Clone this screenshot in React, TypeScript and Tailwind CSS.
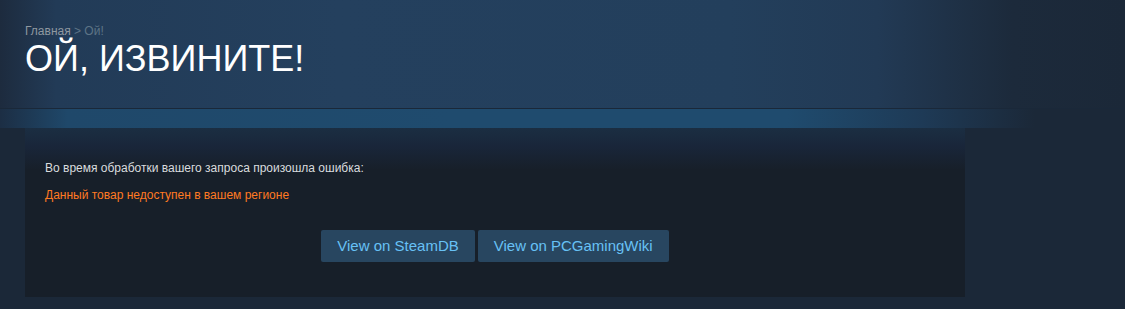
import React from "react";

export default function App() {
  return (
    <div className="w-[1125px] h-[309px] overflow-hidden bg-[#1b2838] font-['Liberation_Sans',Arial,sans-serif]">
      <div className="h-[108px] pl-[25px] pt-[23px] bg-[linear-gradient(90deg,#1d2b3e_0%,#223b57_5%,#24405e_30%,#233f5c_65%,#223a55_78%,#1c2a3b_90%,#1b2838_100%)]">
        <div className="text-[12px] leading-[16px] text-[#8f98a0]">
          Главная <span className="text-[#5d7486]">&gt; Ой!</span>
        </div>
        <h1 className="mt-0 text-[36px] leading-[40px] text-white font-normal uppercase tracking-[0px]">
          Ой, извините!
        </h1>
      </div>
      <div className="h-px bg-[#1a2839]" />
      <div className="h-[19px] bg-[linear-gradient(90deg,#1c2e44_0%,#1f486a_6%,#1f4b6e_40%,#1f4b6e_70%,#1e3a56_82%,#1b2838_92%)]" />
      <div className="ml-[25px] w-[940px] h-[169px] bg-[linear-gradient(180deg,#1b2e42_0%,#19263a_18px,#171f29_42px)] pt-[31px] px-[20px]">
        <p className="text-[12px] leading-[18px] text-[#d9dcdf]">
          Во время обработки вашего запроса произошла ошибка:
        </p>
        <p className="mt-[9px] text-[12px] leading-[18px] text-[#ff7a22]">
          Данный товар недоступен в вашем регионе
        </p>
        <div className="mt-[26px] flex justify-center gap-[3px]">
          <a className="h-[32px] px-[16px] flex items-center rounded-[2px] bg-[#284660] text-[15px] text-[#67c1f5]">
            View on SteamDB
          </a>
          <a className="h-[32px] px-[16px] flex items-center rounded-[2px] bg-[#284660] text-[15px] text-[#67c1f5]">
            View on PCGamingWiki
          </a>
        </div>
      </div>
    </div>
  );
}
